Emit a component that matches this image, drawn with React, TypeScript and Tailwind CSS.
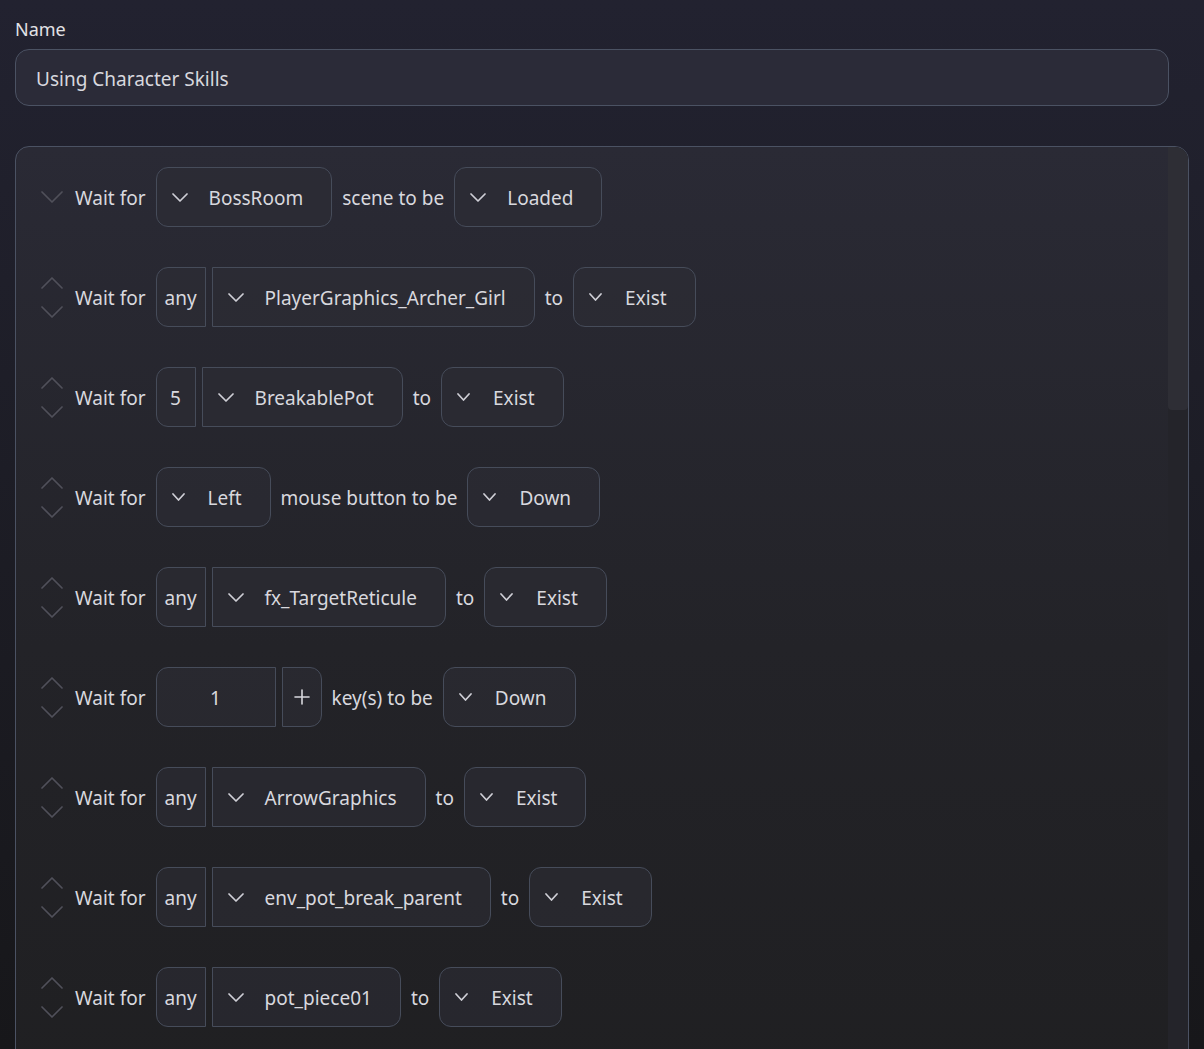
import { ReactNode } from "react"

const font = { fontFamily: '"Noto Sans", "Open Sans", sans-serif' }

const Chevron = ({ w = 13, up = false, className = "" }: { w?: number; up?: boolean; className?: string }) => {
  const h = Math.round(w / 2)
  return (
    <svg width={w + 2} height={h + 2} viewBox={`-1 -1 ${w + 2} ${h + 2}`} className={className} fill="none">
      <polyline
        points={up ? `0,${h} ${w / 2},0 ${w},${h}` : `0,0 ${w / 2},${h} ${w},0`}
        stroke="currentColor"
        strokeWidth="1.7"
        strokeLinecap="round"
        strokeLinejoin="round"
      />
    </svg>
  )
}

const box = "h-[60px] flex items-center border border-[#464c5a] bg-[#2d2d35]/60 text-[#d8d8de] text-[19px]"

const Dropdown = ({ label, small = false, side = "all" }: { label: string; small?: boolean; side?: "all" | "right" }) => (
  <div className={`${box} pl-[15px] pr-7 ${side === "all" ? "rounded-xl" : "rounded-r-xl"}`}>
    <Chevron w={small ? 11 : 14} className="text-[#cfcfd6]" />
    <span className={`pt-0.5 ${small ? "ml-[23px]" : "ml-[21px]"}`}>{label}</span>
  </div>
)

const Left = ({ children, w }: { children: ReactNode; w: string }) => (
  <div className={`${box} ${w} justify-center rounded-l-xl pt-0.5`}>{children}</div>
)

const Word = ({ children }: { children: ReactNode }) => <span className="pt-0.5 text-[19px] text-[#d8d8de]">{children}</span>

const Row = ({ first = false, children }: { first?: boolean; children: ReactNode }) => (
  <div className="h-[100px] flex items-center">
    <div className="w-6 flex flex-col items-center justify-center gap-[17px] text-[#50505a]">
      {!first && <Chevron w={20} up />}
      <Chevron w={20} />
    </div>
    <div className="ml-[11px] flex items-center gap-2.5">
      <Word>Wait for</Word>
      {children}
    </div>
  </div>
)

const Group = ({ item }: { item: string }) => (
  <div className="flex items-center gap-1.5">
    <Left w="w-[50px]">any</Left>
    <Dropdown label={item} side="right" />
  </div>
)

export default function App() {
  return (
    <div style={font} className="h-[1049px] overflow-hidden bg-linear-to-b from-[#222230] to-[#17171a] px-[15px] pt-[17px]">
      <div className="text-[18px] text-[#e2e2e6] leading-6">Name</div>
      <div className="mt-[8px] mr-[20px] h-[57px] rounded-[14px] border border-[#4b5263] bg-[#2b2b38] flex items-center pl-5 pt-1 text-[19px] text-[#d8d8de]">
        Using Character Skills
      </div>
      <div className="mt-10 h-[1000px] rounded-[14px] border border-[#4b5263] bg-linear-to-b from-[#2a2a35] via-[#232328] to-[#1f1f21] flex overflow-hidden">
        <div className="flex-1 pl-6">
          <Row first>
            <Dropdown label="BossRoom" />
            <Word>scene to be</Word>
            <Dropdown label="Loaded" />
          </Row>
          <Row>
            <Group item="PlayerGraphics_Archer_Girl" />
            <Word>to</Word>
            <Dropdown label="Exist" small />
          </Row>
          <Row>
            <div className="flex items-center gap-1.5">
              <Left w="w-[40px]">5</Left>
              <Dropdown label="BreakablePot" side="right" />
            </div>
            <Word>to</Word>
            <Dropdown label="Exist" small />
          </Row>
          <Row>
            <Dropdown label="Left" small />
            <Word>mouse button to be</Word>
            <Dropdown label="Down" small />
          </Row>
          <Row>
            <Group item="fx_TargetReticule" />
            <Word>to</Word>
            <Dropdown label="Exist" small />
          </Row>
          <Row>
            <div className="flex items-center gap-1.5">
              <Left w="w-[120px]">1</Left>
              <div className={`${box} w-[40px] justify-center rounded-r-xl`}>
                <svg width="16" height="16" viewBox="0 0 16 16" stroke="currentColor" strokeWidth="1.6" strokeLinecap="round">
                  <line x1="8" y1="1" x2="8" y2="15" />
                  <line x1="1" y1="8" x2="15" y2="8" />
                </svg>
              </div>
            </div>
            <Word>key(s) to be</Word>
            <Dropdown label="Down" small />
          </Row>
          <Row>
            <Group item="ArrowGraphics" />
            <Word>to</Word>
            <Dropdown label="Exist" small />
          </Row>
          <Row>
            <Group item="env_pot_break_parent" />
            <Word>to</Word>
            <Dropdown label="Exist" small />
          </Row>
          <Row>
            <Group item="pot_piece01" />
            <Word>to</Word>
            <Dropdown label="Exist" small />
          </Row>
        </div>
        <div className="w-5 bg-[#24242a]">
          <div className="h-[263px] rounded-b-sm bg-[#2e2e35]" />
        </div>
      </div>
    </div>
  )
}
